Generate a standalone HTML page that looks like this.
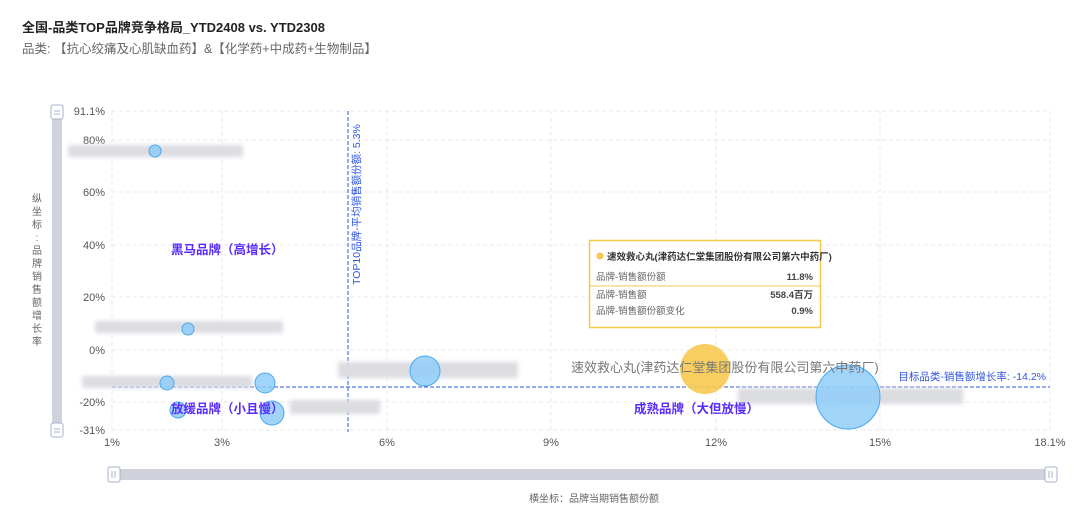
<!DOCTYPE html>
<html><head><meta charset="utf-8"><style>
html,body{margin:0;padding:0;background:#fff;}
body{width:1080px;height:520px;overflow:hidden;font-family:"Liberation Sans","Noto Sans CJK SC",sans-serif;}
</style></head><body>
<svg width="1080" height="520" xmlns="http://www.w3.org/2000/svg" font-family="Liberation Sans, Noto Sans CJK SC, sans-serif">
<defs>
<filter id="b" x="-20%" y="-100%" width="140%" height="300%"><feGaussianBlur stdDeviation="2"/></filter>
</defs>
<text x="22" y="32" font-size="13" font-weight="bold" fill="#222">全国-品类TOP品牌竞争格局_YTD2408 vs. YTD2308</text>
<text x="22" y="53" font-size="12.5" fill="#666">品类: 【抗心绞痛及心肌缺血药】&amp;【化学药+中成药+生物制品】</text>
<g stroke="#e8e8ec" stroke-dasharray="4,3" stroke-width="1">
<line x1="112" y1="111" x2="1050" y2="111"/><line x1="112" y1="140" x2="1050" y2="140"/>
<line x1="112" y1="192" x2="1050" y2="192"/><line x1="112" y1="245" x2="1050" y2="245"/>
<line x1="112" y1="297" x2="1050" y2="297"/><line x1="112" y1="350" x2="1050" y2="350"/>
<line x1="112" y1="402" x2="1050" y2="402"/><line x1="112" y1="430" x2="1050" y2="430"/>
<line x1="112" y1="111" x2="112" y2="430"/><line x1="222" y1="111" x2="222" y2="430"/>
<line x1="387" y1="111" x2="387" y2="430"/><line x1="551" y1="111" x2="551" y2="430"/>
<line x1="716" y1="111" x2="716" y2="430"/><line x1="880" y1="111" x2="880" y2="430"/>
<line x1="1050" y1="111" x2="1050" y2="430"/>
</g>
<g font-size="11" fill="#555" text-anchor="end">
<text x="105" y="115">91.1%</text><text x="105" y="144">80%</text><text x="105" y="196">60%</text>
<text x="105" y="249">40%</text><text x="105" y="301">20%</text><text x="105" y="354">0%</text>
<text x="105" y="406">-20%</text><text x="105" y="434">-31%</text>
</g>
<g font-size="11" fill="#555" text-anchor="middle">
<text x="112" y="446">1%</text><text x="222" y="446">3%</text><text x="387" y="446">6%</text>
<text x="551" y="446">9%</text><text x="716" y="446">12%</text><text x="880" y="446">15%</text><text x="1050" y="446">18.1%</text>
</g>
<line x1="348" y1="111" x2="348" y2="432" stroke="#2f55e0" stroke-dasharray="4,2"/>
<line x1="112" y1="387" x2="1050" y2="387" stroke="#2f55e0" stroke-dasharray="4,2"/>
<text transform="translate(360,285) rotate(-90)" font-size="10.5" fill="#2f55e0">TOP10品牌-平均销售额份额: 5.3%</text>
<text x="1046" y="380" font-size="10.5" fill="#2f55e0" text-anchor="end">目标品类-销售额增长率: -14.2%</text>
<g filter="url(#b)" fill="#dcdde1">
<rect x="68" y="145" width="175" height="12"/>
<rect x="95" y="321" width="188" height="12"/>
<rect x="82" y="376" width="170" height="12"/>
<rect x="338" y="362" width="180" height="16"/>
<rect x="290" y="400" width="90" height="14"/>
<rect x="738" y="388" width="225" height="16"/>
</g>
<g fill="#8fcdf8" fill-opacity="0.85" stroke="#4aa8f0" stroke-width="1">
<circle cx="155" cy="151" r="6"/>
<circle cx="188" cy="329" r="6"/>
<circle cx="167" cy="383" r="7"/>
<circle cx="265" cy="383" r="10"/>
<circle cx="178" cy="410" r="8"/>
<circle cx="272" cy="413" r="12"/>
<circle cx="425" cy="371" r="15"/>
<circle cx="848" cy="397" r="32"/>
</g>
<circle cx="705" cy="369" r="25" fill="#f6c94e" fill-opacity="0.9"/>
<text x="571" y="372" font-size="13" fill="#777">速效救心丸(津药达仁堂集团股份有限公司第六中药厂)</text>
<g font-size="12.5" font-weight="bold" fill="#5a2bff">
<text x="171" y="254">黑马品牌（高增长）</text>
<text x="171" y="413">放缓品牌（小且慢）</text>
<text x="634" y="413">成熟品牌（大但放慢）</text>
</g>
<rect x="589.5" y="240.5" width="231" height="87" fill="#fff" stroke="#f2c94c" stroke-width="1.5"/>
<line x1="590" y1="286" x2="820" y2="286" stroke="#f2c94c"/>
<circle cx="600" cy="256" r="3.5" fill="#f6c94e"/>
<text x="607" y="260" font-size="9.5" font-weight="bold" fill="#333">速效救心丸(津药达仁堂集团股份有限公司第六中药厂)</text>
<g font-size="9.5" fill="#666"><text x="596" y="280">品牌-销售额份额</text><text x="596" y="298">品牌-销售额</text><text x="596" y="314">品牌-销售额份额变化</text></g>
<g font-size="9.5" font-weight="bold" fill="#444" text-anchor="end"><text x="813" y="280">11.8%</text><text x="813" y="298">558.4百万</text><text x="813" y="314">0.9%</text></g>
<rect x="52" y="112" width="10" height="316" fill="#d0d3db"/>
<rect x="51" y="105" width="12" height="14" rx="2" fill="#fff" stroke="#a8b0cc"/>
<line x1="54" y1="111" x2="60" y2="111" stroke="#a8b0cc"/><line x1="54" y1="114" x2="60" y2="114" stroke="#a8b0cc"/>
<rect x="51" y="423" width="12" height="14" rx="2" fill="#fff" stroke="#a8b0cc"/>
<line x1="54" y1="429" x2="60" y2="429" stroke="#a8b0cc"/><line x1="54" y1="432" x2="60" y2="432" stroke="#a8b0cc"/>
<g font-size="10" fill="#666" text-anchor="middle">
<text x="37" y="202">纵</text><text x="37" y="215">坐</text><text x="37" y="228">标</text><text x="37" y="241">:</text>
<text x="37" y="254">品</text><text x="37" y="267">牌</text><text x="37" y="280">销</text><text x="37" y="293">售</text>
<text x="37" y="306">额</text><text x="37" y="319">增</text><text x="37" y="332">长</text><text x="37" y="345">率</text>
</g>
<rect x="112" y="469" width="940" height="11" fill="#d0d3db"/>
<rect x="108" y="467" width="12" height="15" rx="2" fill="#fff" stroke="#a8b0cc"/>
<line x1="112" y1="471" x2="112" y2="478" stroke="#a8b0cc"/><line x1="115" y1="471" x2="115" y2="478" stroke="#a8b0cc"/>
<rect x="1045" y="467" width="12" height="15" rx="2" fill="#fff" stroke="#a8b0cc"/>
<line x1="1049" y1="471" x2="1049" y2="478" stroke="#a8b0cc"/><line x1="1052" y1="471" x2="1052" y2="478" stroke="#a8b0cc"/>
<text x="594" y="502" font-size="10" fill="#666" text-anchor="middle">横坐标：品牌当期销售额份额</text>
</svg>
</body></html>
